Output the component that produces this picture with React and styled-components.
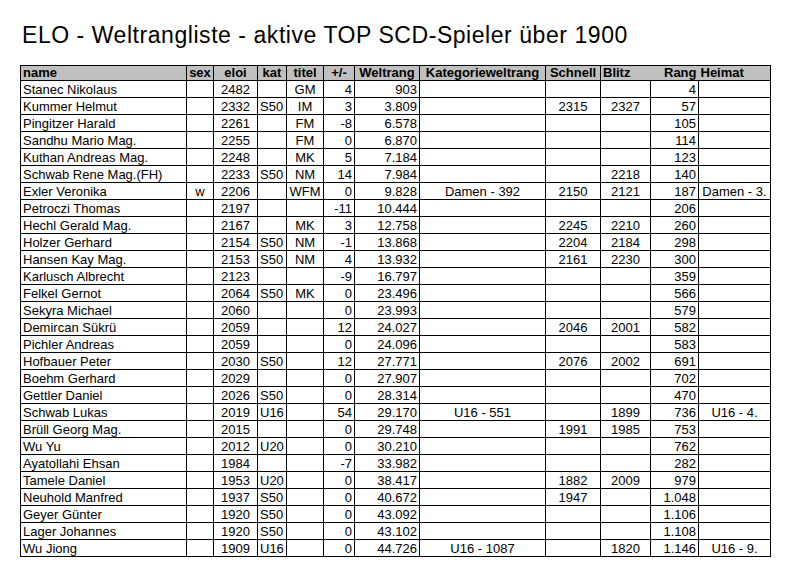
import React from "react";
import styled, { createGlobalStyle } from "styled-components";

const Global = createGlobalStyle`
  html, body { margin: 0; padding: 0; background: #ffffff; }
  body { font-family: "Liberation Sans", Arial, sans-serif; color: #000; }
`;

const Page = styled.div`
  width: 789px;
  height: 576px;
  padding: 22px 0 0 20px;
  box-sizing: border-box;
  background: #fff;
`;

const Title = styled.h1`
  margin: 0 0 0 2px;
  font-weight: normal;
  font-size: 23px;
  line-height: 26px;
  height: 43px;
  letter-spacing: 0.55px;
  white-space: nowrap;
`;

const Table = styled.table`
  border-collapse: collapse;
  table-layout: fixed;
  width: 750px;
  font-size: 13px;
  border: 1px solid #000;
`;

const Col = styled.col`
  width: ${(p) => p.$w}px;
`;

const HeadCell = styled.th`
  background: #c0c0c0;
  font-weight: bold;
  height: 14px;
  line-height: 14px;
  padding: 0 2px;
  text-align: ${(p) => p.$align || "center"};
  border-top: 1px solid #000;
  border-bottom: 1px solid #000;
  border-left: ${(p) => (p.$open ? "none" : "1px solid #000")};
  white-space: nowrap;
  overflow: visible;
`;

const Cell = styled.td`
  height: 15px;
  line-height: 15px;
  padding: 1px 2px 0;
  border: 1px solid #000;
  text-align: ${(p) => p.$align || "left"};
  white-space: nowrap;
  overflow: hidden;
`;

const cols = [
  { w: 166, key: "name", align: "left", head: "name", headAlign: "left" },
  { w: 27, key: "sex", align: "center", head: "sex" },
  { w: 44, key: "eloi", align: "center", head: "eloi" },
  { w: 29, key: "kat", align: "left", head: "kat" },
  { w: 37, key: "titel", align: "center", head: "titel" },
  { w: 31, key: "pm", align: "right", head: "+/-" },
  { w: 65, key: "welt", align: "right", head: "Weltrang" },
  { w: 126, key: "katw", align: "center", head: "Kategorieweltrang" },
  { w: 55, key: "schnell", align: "center", head: "Schnell" },
  { w: 50, key: "blitz", align: "center", head: "Blitz", headAlign: "left" },
  { w: 48, key: "rang", align: "right", head: "Rang", headAlign: "right", open: true },
  { w: 72, key: "heimat", align: "center", head: "Heimat", headAlign: "left", open: true },
];

const raw = [
  ["Stanec Nikolaus", "", "2482", "", "GM", "4", "903", "", "", "", "4", ""],
  ["Kummer Helmut", "", "2332", "S50", "IM", "3", "3.809", "", "2315", "2327", "57", ""],
  ["Pingitzer Harald", "", "2261", "", "FM", "-8", "6.578", "", "", "", "105", ""],
  ["Sandhu Mario Mag.", "", "2255", "", "FM", "0", "6.870", "", "", "", "114", ""],
  ["Kuthan Andreas Mag.", "", "2248", "", "MK", "5", "7.184", "", "", "", "123", ""],
  ["Schwab Rene Mag.(FH)", "", "2233", "S50", "NM", "14", "7.984", "", "", "2218", "140", ""],
  ["Exler Veronika", "w", "2206", "", "WFM", "0", "9.828", "Damen - 392", "2150", "2121", "187", "Damen - 3."],
  ["Petroczi Thomas", "", "2197", "", "", "-11", "10.444", "", "", "", "206", ""],
  ["Hechl Gerald Mag.", "", "2167", "", "MK", "3", "12.758", "", "2245", "2210", "260", ""],
  ["Holzer Gerhard", "", "2154", "S50", "NM", "-1", "13.868", "", "2204", "2184", "298", ""],
  ["Hansen Kay Mag.", "", "2153", "S50", "NM", "4", "13.932", "", "2161", "2230", "300", ""],
  ["Karlusch Albrecht", "", "2123", "", "", "-9", "16.797", "", "", "", "359", ""],
  ["Felkel Gernot", "", "2064", "S50", "MK", "0", "23.496", "", "", "", "566", ""],
  ["Sekyra Michael", "", "2060", "", "", "0", "23.993", "", "", "", "579", ""],
  ["Demircan Sükrü", "", "2059", "", "", "12", "24.027", "", "2046", "2001", "582", ""],
  ["Pichler Andreas", "", "2059", "", "", "0", "24.096", "", "", "", "583", ""],
  ["Hofbauer Peter", "", "2030", "S50", "", "12", "27.771", "", "2076", "2002", "691", ""],
  ["Boehm Gerhard", "", "2029", "", "", "0", "27.907", "", "", "", "702", ""],
  ["Gettler Daniel", "", "2026", "S50", "", "0", "28.314", "", "", "", "470", ""],
  ["Schwab Lukas", "", "2019", "U16", "", "54", "29.170", "U16 - 551", "", "1899", "736", "U16 - 4."],
  ["Brüll Georg Mag.", "", "2015", "", "", "0", "29.748", "", "1991", "1985", "753", ""],
  ["Wu Yu", "", "2012", "U20", "", "0", "30.210", "", "", "", "762", ""],
  ["Ayatollahi Ehsan", "", "1984", "", "", "-7", "33.982", "", "", "", "282", ""],
  ["Tamele Daniel", "", "1953", "U20", "", "0", "38.417", "", "1882", "2009", "979", ""],
  ["Neuhold Manfred", "", "1937", "S50", "", "0", "40.672", "", "1947", "", "1.048", ""],
  ["Geyer Günter", "", "1920", "S50", "", "0", "43.092", "", "", "", "1.106", ""],
  ["Lager Johannes", "", "1920", "S50", "", "0", "43.102", "", "", "", "1.108", ""],
  ["Wu Jiong", "", "1909", "U16", "", "0", "44.726", "U16 - 1087", "", "1820", "1.146", "U16 - 9."],
];

export default function App() {
  return (
    <>
      <Global />
      <Page>
        <Title>ELO - Weltrangliste - aktive TOP SCD-Spieler über 1900</Title>
        <Table>
          <colgroup>
            {cols.map((c) => (
              <Col key={c.key} $w={c.w} />
            ))}
          </colgroup>
          <thead>
            <tr>
              {cols.map((c) => (
                <HeadCell key={c.key} $align={c.headAlign} $open={c.open}>
                  {c.head}
                </HeadCell>
              ))}
            </tr>
          </thead>
          <tbody>
            {raw.map((r, i) => (
              <tr key={i}>
                {cols.map((c, j) => (
                  <Cell key={c.key} $align={c.align}>
                    {r[j]}
                  </Cell>
                ))}
              </tr>
            ))}
          </tbody>
        </Table>
      </Page>
    </>
  );
}
